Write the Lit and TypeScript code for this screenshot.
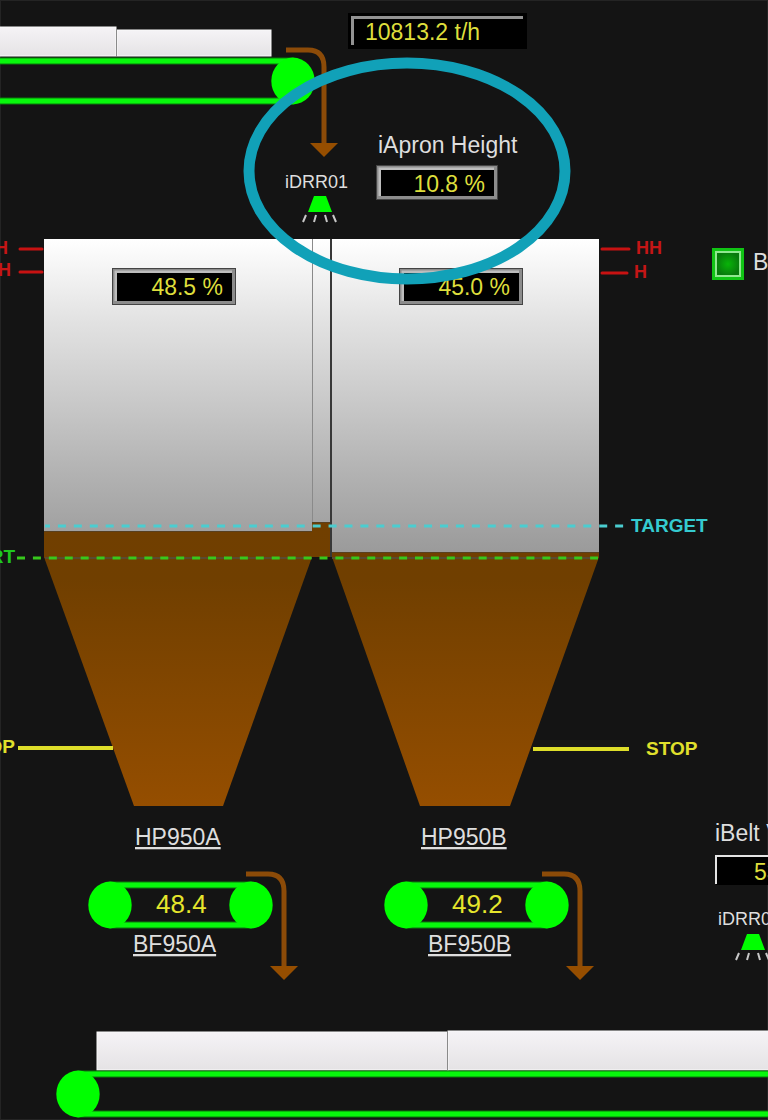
import { LitElement, html, svg, css } from "lit";
import { customElement } from "lit/decorators.js";

interface Feeder { x: number; hopper: string; hopperX: number; feeder: string; feederX: number; load: string; }

const FEEDERS: Feeder[] = [
  { x: 88, hopper: "HP950A", hopperX: 135, feeder: "BF950A", feederX: 133, load: "48.4" },
  { x: 384, hopper: "HP950B", hopperX: 421, feeder: "BF950B", feederX: 428, load: "49.2" },
];

// Raised bezel around a black value field.
const readout = (x: number, y: number, w: number, h: number, value: string, label: string) => svg`
  <g role="group" aria-label=${label}>
    <rect class="bezel-edge" x=${x} y=${y} width=${w} height=${h} />
    <rect class="bezel" x=${x + 1} y=${y + 1} width=${w - 2} height=${h - 2} />
    <path class="bezel-light" d="M${x + 4} ${y + h - 4}V${y + 4}H${x + w - 4}" />
    <rect class="field" x=${x + 5} y=${y + 5} width=${w - 9} height=${h - 9} />
    <text class="value" text-anchor="end" x=${x + w - 13} y=${y + 27}>${value}</text>
  </g>`;

const chute = (x: number, y: number, length: number) => svg`
  <path class="chute" d="M${x} ${y}h22q16 0 16 17v${length - 17}" />
  <path class="chute-head" d="M${x + 24} ${y + length}h28l-14 14z" />`;

const pulley = (x: number, y: number) => svg`
  <ellipse class="run" cx=${x} cy=${y} rx="21.7" ry="23.4" />`;

// Upper and lower strands of a belt.
const strands = (x1: number, x2: number, y: number) => svg`
  <rect class="strand" x=${x1} y=${y - 23} width=${x2 - x1} height="6" />
  <rect class="strand" x=${x1} y=${y + 17} width=${x2 - x1} height="6" />`;

const radar = (x: number, y: number) => svg`
  <path class="run" d="M${x - 6} ${y}h12l6 16h-24z" />
  <path class="rays" d="M${x - 14} ${y + 19}l-3 7M${x - 4} ${y + 19}l-2 7M${x + 5} ${y + 19}l2 7M${x + 13} ${y + 19}l3 7" />`;

@customElement("app-root")
export class AppRoot extends LitElement {
  static styles = css`
    :host { display: block; background: #141414; overflow: hidden; }
    .mimic { display: block; width: 100%; height: auto; font-family: "Liberation Sans", Arial, sans-serif; }
    .frame { fill: none; stroke: #242424; stroke-width: 1; }
    .label { font-size: 23px; fill: #dedede; }
    .tag { font-size: 18px; fill: #dedede; }
    .link { text-decoration: underline; text-decoration-thickness: 2px; }
    .value { font-size: 23px; fill: #dede3c; }
    .load { font-size: 26px; fill: #e6e62c; }
    .limit { font-size: 19px; font-weight: bold; }
    .alarm { font-size: 18px; fill: #c41616; }
    .start { fill: #1fc71f; }
    .target { fill: #35cbd0; }
    .stop { fill: #e0e02c; }
    .alarm-line { stroke: #c81212; stroke-width: 3; stroke-linecap: round; }
    .stop-line { stroke: #dede2a; stroke-width: 4; }
    .target-line { stroke: #4bcdd0; stroke-width: 3; stroke-dasharray: 8 7.92; stroke-dashoffset: 3; }
    .start-line { stroke: #37c81c; stroke-width: 3; stroke-dasharray: 8 7.92; }
    .start-base { stroke: #5a4a30; stroke-width: 2; }
    .bezel-edge { fill: #444; }
    .bezel { fill: #8c8c8c; }
    .bezel-light { fill: none; stroke: #bdbdbd; stroke-width: 3; }
    .field { fill: #000; }
    .groove { fill: none; stroke: #929292; stroke-width: 3; }
    .groove-light { fill: none; stroke: #e4e4e4; stroke-width: 2; }
    .chute { fill: none; stroke: #8c4b08; stroke-width: 5; }
    .chute-head { fill: #964e00; }
    .run { fill: #00ff00; }
    .strand { fill: #08f80c; stroke: #087c0a; stroke-width: 1; }
    .rays { fill: none; stroke: #c8c8c8; stroke-width: 2; }
    .load-block { fill: url(#load); stroke: #fafafa; stroke-width: 1; }
    .seam { stroke: #8a8a8a; stroke-width: 1; }
    .seam-dark { stroke: #383838; stroke-width: 2; }
    .shell { fill: url(#shell); }
    .ore { fill: url(#ore); }
    .ore-line { stroke: #59401f; stroke-width: 1; }
    .lamp { fill: #10c414; }
    .lamp-core { fill: url(#lamp); stroke: #8fe88f; stroke-width: 2; }
    .highlight { fill: none; stroke: #11a1b8; stroke-width: 11; }
  `;

  private feeder(f: Feeder) {
    return svg`
      <a href="#${f.hopper}"><text class="label link" x=${f.hopperX} y="845">${f.hopper}</text></a>
      ${strands(f.x + 22, f.x + 163, 905)}
      ${pulley(f.x + 22, 905)}
      ${pulley(f.x + 163, 905)}
      <text class="load" x=${f.x + 68} y="913">${f.load}</text>
      <a href="#${f.feeder}"><text class="label link" x=${f.feederX} y="952">${f.feeder}</text></a>
      ${chute(f.x + 158, 874, 92)}`;
  }

  render() {
    return html`
      <svg class="mimic" viewBox="0 0 768 1120" role="group" aria-label="Hopper feed overview">
        <defs>
          <linearGradient id="shell" gradientUnits="userSpaceOnUse" x1="0" y1="239" x2="0" y2="557">
            <stop offset="0" stop-color="#ffffff" />
            <stop offset="0.25" stop-color="#e3e3e3" />
            <stop offset="0.75" stop-color="#b1b1b1" />
            <stop offset="1" stop-color="#999999" />
          </linearGradient>
          <linearGradient id="ore" gradientUnits="userSpaceOnUse" x1="0" y1="522" x2="0" y2="806">
            <stop offset="0" stop-color="#713f00" />
            <stop offset="0.2" stop-color="#703f00" />
            <stop offset="1" stop-color="#954e00" />
          </linearGradient>
          <linearGradient id="load" x1="0" y1="0" x2="0" y2="1">
            <stop offset="0" stop-color="#f5f3f6" />
            <stop offset="1" stop-color="#e5e3e5" />
          </linearGradient>
          <radialGradient id="lamp">
            <stop offset="0" stop-color="#08b408" />
            <stop offset="1" stop-color="#087a0c" />
          </radialGradient>
        </defs>

        <rect class="frame" x="0.5" y="0.5" width="767" height="1119" />

        <rect class="load-block" x="-2" y="27" width="118" height="29" />
        <rect class="load-block" x="117" y="30" width="154" height="26" />
        <line class="seam" x1="116.5" y1="29" x2="116.5" y2="56" />
        ${strands(-2, 293, 81)}
        ${pulley(293, 81)}
        ${chute(286, 50, 93)}

        <rect class="field" x="348" y="13" width="179" height="36" />
        <path class="groove" d="M352.500 45V17.500H523" />
        <text class="value" x="365" y="40">10813.2 t/h</text>

        <text class="label" x="378" y="153">iApron Height</text>
        ${readout(376, 165, 122, 35, "10.8 %", "iApron Height")}
        <text class="tag" x="285" y="188">iDRR01</text>
        ${radar(320, 196)}

        <rect class="shell" x="44" y="239" width="555" height="318" />
        <rect class="ore" x="44" y="531" width="268" height="27" />
        <path class="ore" d="M44 557H312L223 806H134z" />
        <rect class="ore" x="332" y="552" width="267" height="6" />
        <path class="ore" d="M332 557H599L510 806H420z" />
        <rect class="ore" x="312" y="522" width="19" height="35" />
        <path class="ore-line" d="M44 531.500H312M332 552.500H599M312 522.500H331" />
        <line class="seam" x1="312.5" y1="239" x2="312.5" y2="522" />
        <line class="seam-dark" x1="331" y1="239" x2="331" y2="557" />

        <line class="target-line" x1="45" y1="526" x2="624" y2="526" />
        <path class="start-base" d="M45 558H312M332 558H598" />
        <line class="start-line" x1="17" y1="558" x2="598" y2="558" />
        <text class="limit target" x="631" y="532">TARGET</text>
        <text class="limit start" text-anchor="end" x="15" y="563">START</text>

        <path class="alarm-line" d="M20 249H42M20 272H42M602 249H629M602 273H627" />
        <text class="limit alarm" text-anchor="end" x="8" y="254">HH</text>
        <text class="limit alarm" text-anchor="end" x="11" y="276">H</text>
        <text class="limit alarm" x="636" y="254">HH</text>
        <text class="limit alarm" x="634" y="278">H</text>

        <path class="stop-line" d="M18 748H113M533 749H629" />
        <text class="limit stop" text-anchor="end" x="15" y="753">STOP</text>
        <text class="limit stop" x="646" y="755">STOP</text>

        ${readout(112, 268, 124, 37, "48.5 %", "HP950A level")}
        ${readout(399, 268, 124, 37, "45.0 %", "HP950B level")}

        <rect class="lamp" x="712" y="248" width="32" height="32" />
        <rect class="lamp-core" x="716" y="252" width="24" height="24" />
        <text class="label" x="753" y="270">B</text>

        ${FEEDERS.map((f) => this.feeder(f))}

        <text class="label" x="715" y="841">iBelt V</text>
        <rect class="field" x="716" y="856" width="60" height="29" />
        <path class="groove-light" d="M716 884V856H776" />
        <text class="value" x="754" y="880">53</text>
        <text class="tag" x="718" y="925">iDRR02</text>
        ${radar(753, 934)}

        <rect class="load-block" x="97" y="1032" width="351" height="38" />
        <rect class="load-block" x="448" y="1031" width="330" height="39" />
        <line class="seam" x1="447.5" y1="1031" x2="447.5" y2="1070" />
        ${strands(78, 778, 1094)}
        ${pulley(78, 1094)}

        <ellipse class="highlight" cx="407" cy="171" rx="158" ry="108" />
      </svg>
    `;
  }
}
